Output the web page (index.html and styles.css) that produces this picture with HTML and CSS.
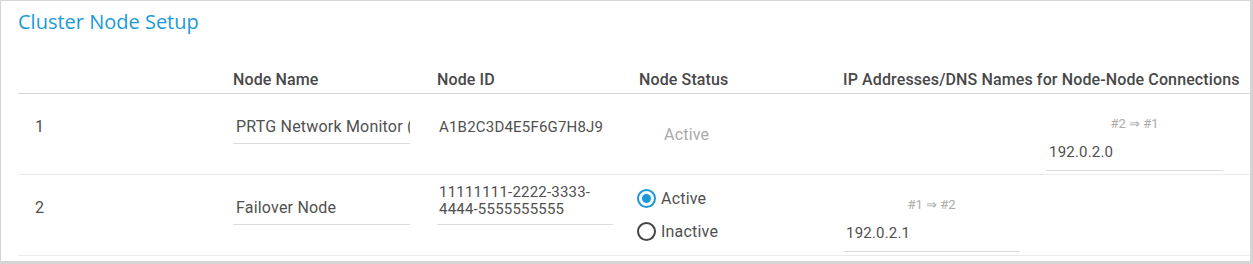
FILE: index.html
```html
<!DOCTYPE html>
<html lang="en">
<head>
  <meta charset="UTF-8">
  <title>Cluster Node Setup</title>
  <link rel="stylesheet" href="styles.css">
</head>
<body>
  <div class="panel">
    <h2 class="title">Cluster Node Setup</h2>

    <div class="grid head">
      <div></div>
      <div>Node Name</div>
      <div>Node ID</div>
      <div>Node Status</div>
      <div class="ip-head">IP Addresses/DNS Names for Node-Node Connections</div>
    </div>

    <!-- node 1 (master) -->
    <div class="grid row">
      <div class="num">1</div>
      <div class="name"><input class="field" type="text" value="PRTG Network Monitor (Cluster Node 1)"></div>
      <div class="nid"><div class="id-text">A1B2C3D4E5F6G7H8J9</div></div>
      <div class="status"><span class="status-text">Active</span></div>
      <div class="ip"></div>
      <div class="ip">
        <div class="ip-label">#2 ⇒ #1</div>
        <input class="field ip-field" type="text" value="192.0.2.0">
      </div>
    </div>

    <!-- node 2 (failover) -->
    <div class="grid row">
      <div class="num">2</div>
      <div class="name"><input class="field" type="text" value="Failover Node"></div>
      <div class="nid"><textarea class="id-area" rows="2">11111111-2222-3333-4444-5555555555</textarea></div>
      <div class="status">
        <label class="radio-opt"><span class="radio on"></span>Active</label>
        <label class="radio-opt"><span class="radio"></span>Inactive</label>
      </div>
      <div class="ip">
        <div class="ip-label">#1 ⇒ #2</div>
        <input class="field ip-field" type="text" value="192.0.2.1">
      </div>
      <div class="ip"></div>
    </div>
  </div>
</body>
</html>
```

FILE: styles.css
```css
* {
  box-sizing: border-box;
}
body {
  margin: 0;
  font-family: Roboto, "Liberation Sans", sans-serif;
  color: #505050;
  background: #fff;
}
.panel {
  height: 264px;
  border: 1px solid #d4d4d4;
  border-right-width: 3px;
  border-bottom-width: 3px;
  padding: 9px 0 0 17px;
  overflow: hidden;
}
.title {
  margin: 0 0 36px;
  font-family: "Open Sans", sans-serif;
  font-weight: 400;
  font-size: 20px;
  line-height: 24px;
  color: #1b9ad6;
}
.grid {
  display: grid;
  grid-template-columns: 215px 204px 202px 204px 203px 204px;
}
.head {
  font-size: 16px;
  font-weight: 500;
  line-height: 20px;
  letter-spacing: 0.12px;
  color: #484848;
  padding-bottom: 3px;
  border-bottom: 1px solid #d6d6d6;
}
.ip-head {
  grid-column: span 2;
  white-space: nowrap;
}
.row {
  height: 81px;
  font-size: 16px;
  letter-spacing: 0.2px;
  border-bottom: 1px solid #ebebeb;
}
.num {
  padding: 15px 0 0 17px;
  line-height: 35px;
}
.name {
  padding-top: 15px;
}
.field {
  display: block;
  width: 177px;
  height: 35px;
  padding: 0 0 0 3px;
  border: 0;
  border-bottom: 1px solid #dcdcdc;
  font: inherit;
  letter-spacing: inherit;
  color: inherit;
  background: transparent;
  outline: none;
}
.nid {
  align-self: end;
  padding-bottom: 30px;
  font-size: 15px;
}
.id-text {
  width: 176px;
  padding: 0 0 7px 2px;
  line-height: 17px;
  border-bottom: 1px solid transparent;
}
.id-area {
  display: block;
  width: 176px;
  height: 41px;
  padding: 0 0 6px 2px;
  border: 0;
  border-bottom: 1px solid #dcdcdc;
  font: inherit;
  line-height: 17px;
  letter-spacing: inherit;
  color: inherit;
  background: transparent;
  resize: none;
  overflow: hidden;
  outline: none;
}
.status {
  align-self: center;
}
.status-text {
  padding-left: 25px;
  color: #aaa;
}
.radio-opt {
  display: flex;
  align-items: center;
  gap: 5px;
  height: 33px;
  margin-left: -2px;
}
.radio {
  width: 19px;
  height: 19px;
  border: 2px solid #444;
  border-radius: 50%;
  display: flex;
  align-items: center;
  justify-content: center;
}
.radio.on {
  border-color: #1b9ad6;
}
.radio.on::after {
  content: "";
  width: 9px;
  height: 9px;
  border-radius: 50%;
  background: #1b9ad6;
}
.ip {
  padding-top: 22px;
}
.ip-label {
  width: 177px;
  text-align: center;
  font-size: 13px;
  line-height: 15px;
  letter-spacing: 0;
  color: #aaa;
  margin-bottom: 3px;
}
.ip-field {
  height: 37px;
  font-size: 15px;
}
```
